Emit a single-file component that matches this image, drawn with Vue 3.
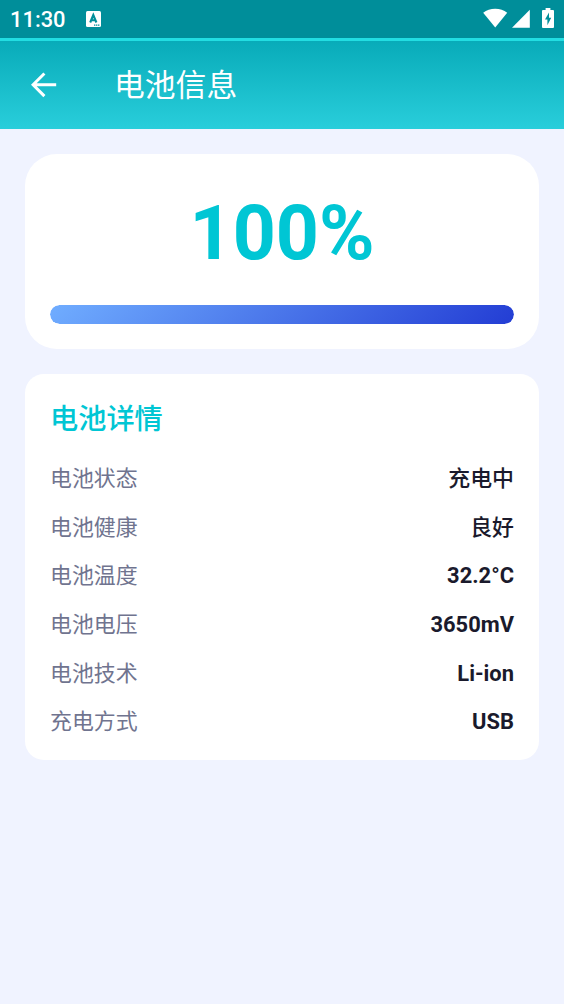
<script setup>
const rows = [
  { label: '电池状态', value: '充电中', cjk: true },
  { label: '电池健康', value: '良好', cjk: true },
  { label: '电池温度', value: '32.2°C' },
  { label: '电池电压', value: '3650mV' },
  { label: '电池技术', value: 'Li-ion' },
  { label: '充电方式', value: 'USB' },
]
const level = 100
</script>

<template>
  <div class="screen">
    <header class="status">
      <span class="time">11:30</span>
      <svg class="note" width="15" height="16" viewBox="0 0 15 16">
        <rect width="15" height="16" rx="1.5" fill="#fff" />
        <path d="M4.2 11.5 7.3 4 10.4 11.5M5.4 9.3H9.2" fill="none" stroke="#008e9a" stroke-width="2.1" />
        <path d="M8 14.2H13.5" stroke="#008e9a" stroke-width="1.2" stroke-dasharray="1.4 .6" />
      </svg>
      <svg class="wifi" width="25" height="20" viewBox="0 0 25 20">
        <path d="M.2 4.8C3.5 2.2 7.6.8 12.2.8S20.9 2.2 24.2 4.8L12.2 19.6Z" fill="#fff" />
      </svg>
      <svg class="signal" width="18" height="19" viewBox="0 0 18 19">
        <path d="M17.8.7V18.8H0Z" fill="#fff" />
      </svg>
      <svg class="battery" width="12" height="20" viewBox="0 0 12 20">
        <path d="M3.6 0H8.4V2H11Q12 2 12 3V19Q12 20 11 20H1Q0 20 0 19V3Q0 2 1 2H3.6Z" fill="#fff" />
        <path d="M7 4.5 3 11.6H5.4V17.2L9.2 9.8H7Z" fill="#008e9a" />
      </svg>
    </header>

    <nav class="bar">
      <svg class="back" width="26" height="26" viewBox="0 0 26 26">
        <path d="M25.2 12.8H2.5M13.4 1.5 2.1 12.8 13.4 24.1" fill="none" stroke="#fff" stroke-width="3" />
      </svg>
      <h1>电池信息</h1>
    </nav>

    <main>
      <section class="card level">
        <div class="percent">{{ level }}%</div>
        <div class="track"><div class="fill" :style="{ width: level + '%' }"></div></div>
      </section>

      <section class="card details">
        <h2>电池详情</h2>
        <dl>
          <div v-for="row in rows" :key="row.label" class="row">
            <dt>{{ row.label }}</dt>
            <dd :class="{ cjk: row.cjk }">{{ row.value }}</dd>
          </div>
        </dl>
      </section>
    </main>
  </div>
</template>

<style>
body {
  background: #f0f3ff;
}
</style>

<style scoped>
.screen {
  box-sizing: border-box;
  height: 1004px;
  overflow: hidden;
  background: #f0f3ff;
  font-family: Roboto, "Noto Sans CJK SC", sans-serif;
}
.status {
  display: flex;
  box-sizing: border-box;
  height: 41px;
  padding: 0 10px;
  background: #008e9a;
  border-bottom: 3px solid #22dde2;
}
.time {
  width: 76px;
  color: #fff;
  font-size: 21.9px;
  font-weight: 500;
  line-height: 39px;
}
.note {
  margin-top: 11px;
}
.wifi {
  margin: 8px 0 0 auto;
}
.signal {
  margin: 9px 0 0 4px;
}
.battery {
  margin: 8px 0 0 12px;
}
.bar {
  display: flex;
  align-items: center;
  box-sizing: border-box;
  height: 88px;
  padding: 0 31px;
  background: linear-gradient(#08abb9, #29cedb);
}
h1 {
  margin: 2px 0 0 57px;
  color: #fff;
  font-size: 30.8px;
  font-weight: 400;
  line-height: 44px;
}
main {
  display: flex;
  flex-direction: column;
  gap: 25px;
  padding: 25px;
}
.card {
  box-sizing: border-box;
  background: #fff;
}
.level {
  height: 195px;
  padding: 35px 25px 0;
  border-radius: 32px;
}
.percent {
  height: 88px;
  color: #00c6d4;
  font-size: 75.2px;
  font-weight: 700;
  line-height: 88px;
  text-align: center;
}
.track {
  height: 19px;
  margin-top: 28px;
  overflow: hidden;
  border-radius: 10px;
}
.fill {
  height: 100%;
  border-radius: 10px;
  background: linear-gradient(135deg, #70adff, #233dd4);
}
.details {
  height: 386px;
  padding: 27px 25px 0;
  border-radius: 19px;
}
h2 {
  margin: 0;
  color: #00c6d4;
  font-size: 28.2px;
  font-weight: 500;
  line-height: 38px;
}
dl {
  margin: 16px 0 0;
}
.row {
  display: flex;
  justify-content: space-between;
  height: 48.7px;
  font-size: 21.9px;
  line-height: 48.7px;
}
dt {
  color: #70748f;
}
dd {
  margin: 0;
  color: #1a1a2c;
  font-weight: 700;
}
dd.cjk {
  font-weight: 500;
}
</style>
